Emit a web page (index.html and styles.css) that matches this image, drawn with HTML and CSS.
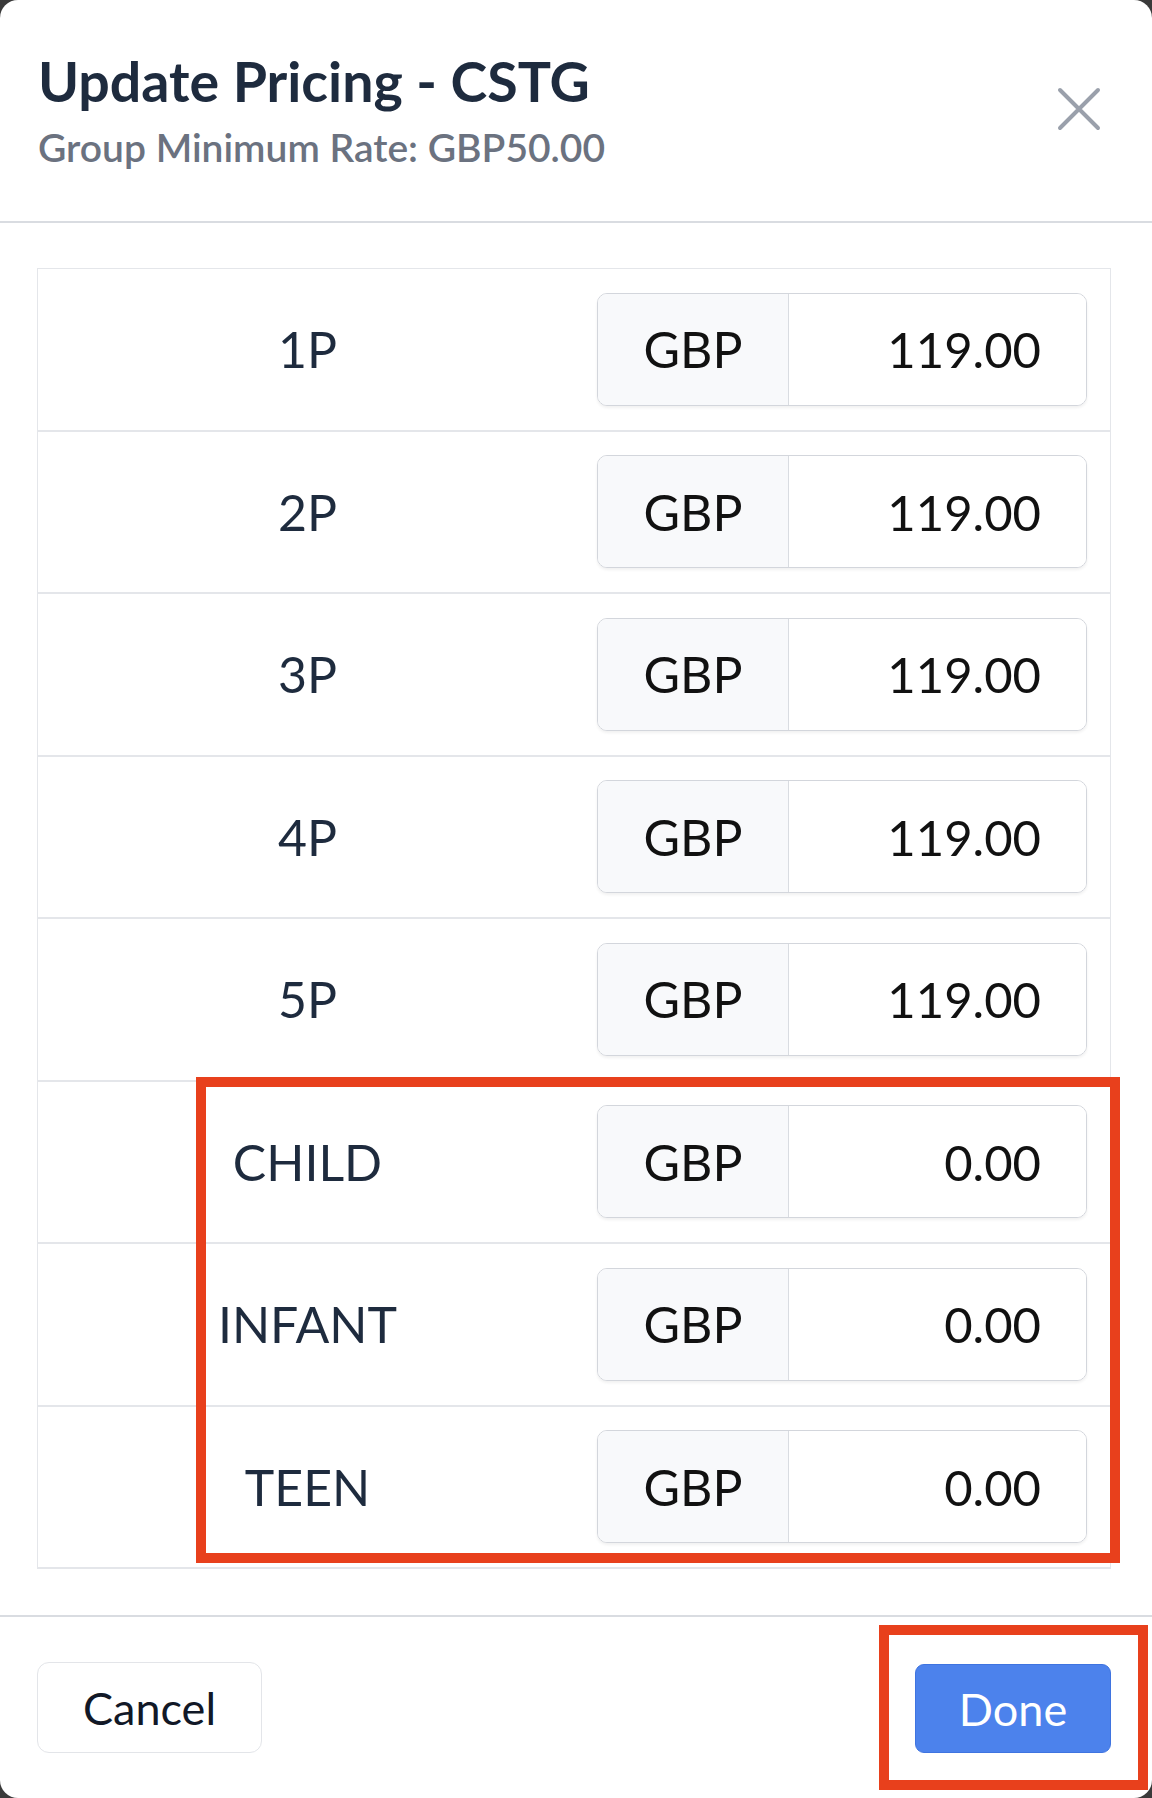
FILE: index.html
```html
<!DOCTYPE html>
<html lang="en">
<head>
<meta charset="utf-8">
<title>Update Pricing - CSTG</title>
<link rel="stylesheet" href="styles.css">
</head>
<body>
<div class="modal">
  <header class="modal-header">
    <div class="titles">
      <h1 class="title">Update Pricing - CSTG</h1>
      <p class="subtitle">Group Minimum Rate: GBP50.00</p>
    </div>
    <button class="close" aria-label="Close">
      <svg width="44" height="44" viewBox="0 0 44 44"><path d="M3 3 L41 41 M41 3 L3 41" stroke="#9aa0ab" stroke-width="4" stroke-linecap="round" fill="none"/></svg>
    </button>
  </header>

  <section class="modal-body">
    <div class="price-table">
      <div class="row"><div class="label">1P</div><div class="input-group"><span class="addon">GBP</span><span class="value">119.00</span></div></div>
      <div class="row"><div class="label">2P</div><div class="input-group"><span class="addon">GBP</span><span class="value">119.00</span></div></div>
      <div class="row"><div class="label">3P</div><div class="input-group"><span class="addon">GBP</span><span class="value">119.00</span></div></div>
      <div class="row"><div class="label">4P</div><div class="input-group"><span class="addon">GBP</span><span class="value">119.00</span></div></div>
      <div class="row"><div class="label">5P</div><div class="input-group"><span class="addon">GBP</span><span class="value">119.00</span></div></div>
      <div class="row"><div class="label">CHILD</div><div class="input-group"><span class="addon">GBP</span><span class="value">0.00</span></div></div>
      <div class="row"><div class="label">INFANT</div><div class="input-group"><span class="addon">GBP</span><span class="value">0.00</span></div></div>
      <div class="row"><div class="label">TEEN</div><div class="input-group"><span class="addon">GBP</span><span class="value">0.00</span></div></div>
    </div>
  </section>

  <footer class="modal-footer">
    <button class="btn btn-cancel">Cancel</button>
    <button class="btn btn-done">Done</button>
  </footer>

  <div class="highlight highlight-rows"></div>
  <div class="highlight highlight-done"></div>
</div>
</body>
</html>
```
FILE: styles.css
```css
html, body {
  margin: 0;
  padding: 0;
}
body {
  background: #3a3a3a;
  font-family: "Lato", "Noto Sans", sans-serif;
}
.modal {
  position: relative;
  width: 1152px;
  height: 1798px;
  background: #ffffff;
  border-radius: 18px;
  overflow: hidden;
  display: flex;
  flex-direction: column;
}
.modal-header {
  display: flex;
  align-items: center;
  justify-content: space-between;
  padding: 47px 51px 50px 38px;
  border-bottom: 2px solid #d9dce1;
}
.title {
  margin: 0;
  font-size: 55.5px;
  line-height: 67px;
  font-weight: 700;
  color: #1e2b3e;
}
.subtitle {
  margin: 9px 0 0;
  font-size: 39px;
  line-height: 48px;
  font-weight: 600;
  color: #6b7280;
}
.close {
  border: 0;
  background: none;
  padding: 0;
  width: 44px;
  height: 44px;
  display: block;
}
.close svg { display: block; }

.modal-body {
  padding: 45px 41px 46px 37px;
}
.price-table {
  border: 1px solid #e4e6ea;
  border-bottom-width: 0;
}
.row {
  box-sizing: border-box;
  height: 162.5px;
  display: grid;
  grid-template-columns: 1fr 490px;
  column-gap: 20px;
  align-items: center;
  padding-right: 23px;
  border-bottom: 2px solid #e4e6ea;
}
.label {
  text-align: center;
  font-size: 50px;
  color: #1e2b3e;
}
.input-group {
  box-sizing: border-box;
  height: 113px;
  display: flex;
  border: 1px solid #d3d6dc;
  border-radius: 10px;
  overflow: hidden;
  box-shadow: 0 2px 3px rgba(0, 0, 0, 0.06);
  font-size: 50px;
  color: #111111;
}
.addon {
  width: 190px;
  flex: none;
  display: flex;
  align-items: center;
  justify-content: center;
  background: #f8f9fb;
  border-right: 1px solid #d9dce1;
}
.value {
  flex: 1;
  display: flex;
  align-items: center;
  justify-content: flex-end;
  padding-right: 45px;
  font-size: 49px;
  background: #ffffff;
}

.modal-footer {
  display: flex;
  justify-content: space-between;
  align-items: center;
  padding: 45px 41px 0 37px;
  border-top: 2px solid #d9dce1;
}
.btn {
  font-family: "Lato", "Noto Sans", sans-serif;
  font-size: 45px;
  border-radius: 12px;
  cursor: pointer;
}
.btn-cancel {
  width: 225px;
  height: 91px;
  background: #ffffff;
  border: 1px solid #e3e5e9;
  color: #111827;
}
.btn-done {
  width: 196px;
  height: 89px;
  margin-top: 2px;
  background: #4c82ec;
  border: 1px solid #3f74e0;
  border-radius: 9px;
  color: #ffffff;
}

.highlight {
  position: absolute;
  box-sizing: border-box;
  border: 10px solid #e8401c;
  pointer-events: none;
}
.highlight-rows {
  left: 196px;
  top: 1077px;
  width: 924px;
  height: 486px;
}
.highlight-done {
  left: 879px;
  top: 1625px;
  width: 269px;
  height: 165px;
}
```
